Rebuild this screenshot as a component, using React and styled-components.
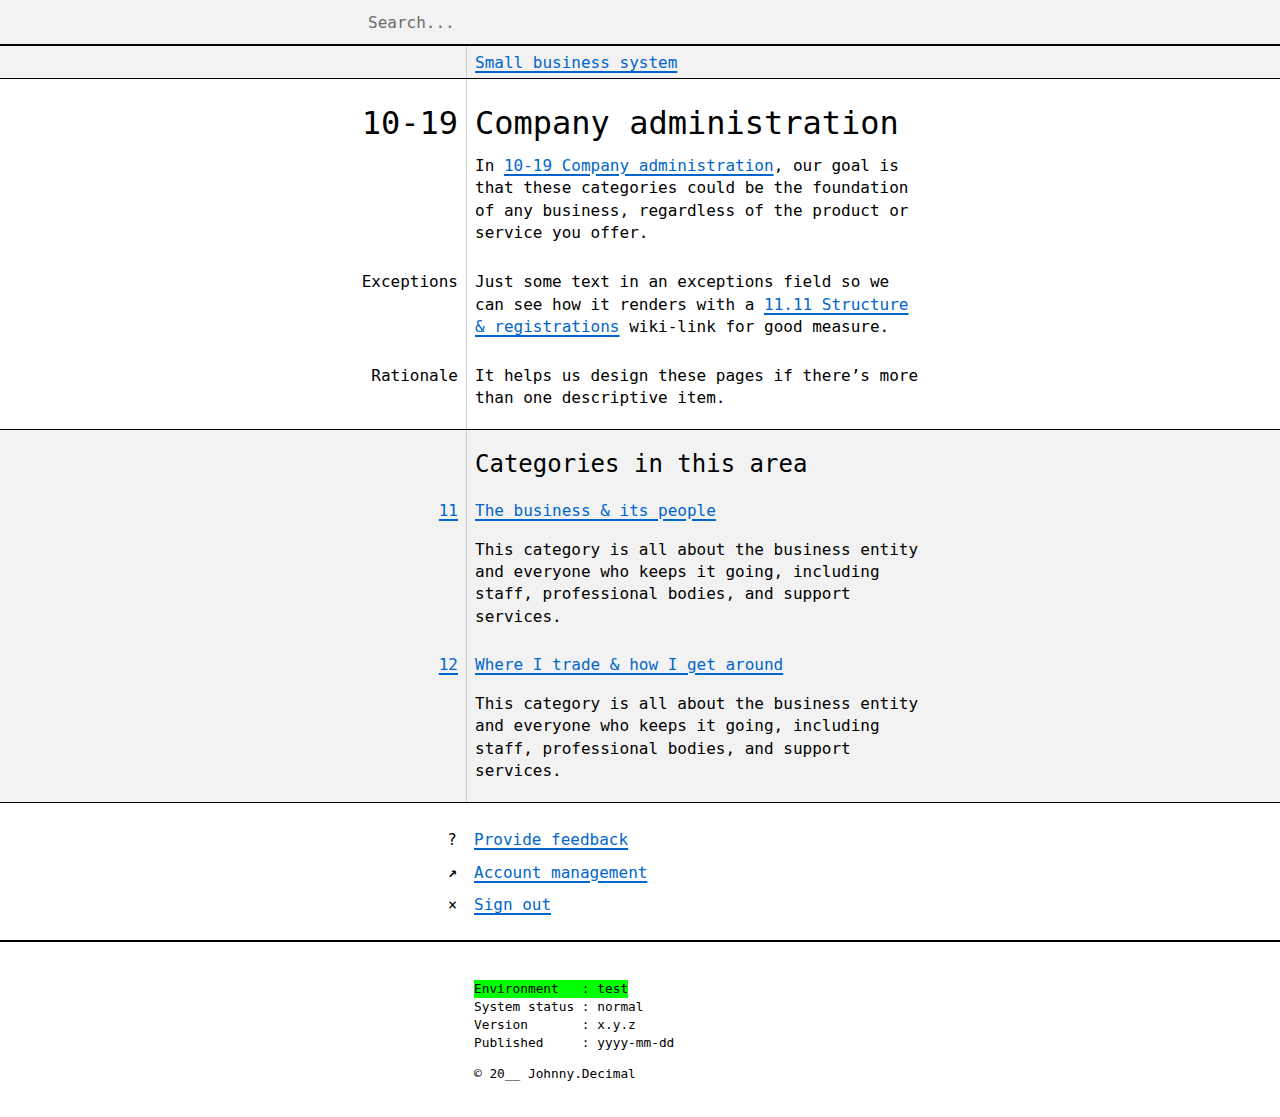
import React from 'react';
import styled, { createGlobalStyle } from 'styled-components';

const GlobalStyle = createGlobalStyle`
  body {
    margin: 0;
    background: #fff;
    color: #000;
    font-family: "DejaVu Sans Mono", "Liberation Mono", monospace;
    font-size: 16px;
    line-height: 1.4;
  }
  * { box-sizing: border-box; }
`;

const LEFT = 467;

const SearchBar = styled.header`
  height: 46px;
  background: #f2f2f2;
  border-bottom: 2px solid #000;
  display: flex;
  align-items: center;
  padding-left: 360px;
`;

const SearchInput = styled.input`
  border: none;
  background: transparent;
  font-family: inherit;
  font-size: 16px;
  padding: 0 8px;
  width: 400px;
  color: #000;
  outline: none;

  &::placeholder {
    color: #6b6b6b;
  }
`;

const Section = styled.section`
  display: flex;
  flex-direction: column;
  background: linear-gradient(#cccccc, #cccccc) ${LEFT - 1}px 0 / 1px 100% no-repeat,
    ${(p) => (p.$grey ? '#f2f2f2' : '#fff')};
  padding: ${(p) => p.$pad || '0'};
  border-bottom: 1px solid #000;
`;

const Row = styled.div`
  display: grid;
  grid-template-columns: ${LEFT}px 1fr;
  margin-top: ${(p) => p.$mt || 0}px;
  align-items: start;
`;

const Label = styled.div`
  text-align: right;
  padding-right: 9px;
  font-size: ${(p) => (p.$big ? '32px' : '16px')};
  line-height: ${(p) => (p.$big ? 1.2 : 1.4)};
`;

const Body = styled.div`
  padding-left: 8px;
  max-width: ${8 + 450}px;
`;

const Link = styled.a`
  color: #0066cc;
  text-decoration: underline;
  text-decoration-thickness: 1.5px;
  text-underline-offset: 3px;
`;

const Title = styled.h1`
  margin: 0;
  font-size: 32px;
  font-weight: 400;
  line-height: 1.2;
`;

const SubTitle = styled.h2`
  margin: 0;
  font-size: 24px;
  font-weight: 400;
  line-height: 1.2;
`;

const Text = styled.p`
  margin: ${(p) => p.$mt || 0}px 0 0;
`;

const Nav = styled.nav`
  padding: 26px 0 24px;
  border-bottom: 2px solid #000;
  display: flex;
  flex-direction: column;
  gap: 10px;
`;

const NavItem = styled.div`
  display: grid;
  grid-template-columns: 466px 1fr;
  align-items: center;
`;

const NavIcon = styled.span`
  text-align: right;
  padding-right: 9px;
  font-size: ${(p) => p.$size || 16}px;
  font-weight: ${(p) => (p.$bold ? 700 : 400)};
`;

const NavLink = styled(Link)`
  padding-left: 8px;
`;

const Meta = styled.footer`
  display: grid;
  grid-template-columns: 466px 1fr;
  padding: 38px 0 33px;
  font-size: 12.8px;
  line-height: 18px;
`;

const MetaBlock = styled.div`
  padding-left: 8px;
  white-space: pre;
`;

const MetaLine = styled.div`
  & > span {
    display: inline-block;
    background: ${(p) => (p.$highlight ? '#00ff00' : 'transparent')};
  }
`;

const Copyright = styled.div`
  margin-top: 13px;
`;

const categories = [
  { id: '11', name: 'The business & its people' },
  { id: '12', name: 'Where I trade & how I get around' },
];

const desc =
  'This category is all about the business entity and everyone who keeps it going, including staff, professional bodies, and support services.';

const meta = [
  ['Environment   : test', true],
  ['System status : normal', false],
  ['Version       : x.y.z', false],
  ['Published     : yyyy-mm-dd', false],
];

export default function App() {
  return (
    <>
      <GlobalStyle />
      <SearchBar>
        <SearchInput placeholder="Search..." />
      </SearchBar>

      <Section $grey $pad="6px 0 4px">
        <Row>
          <Label />
          <Body>
            <Link href="#">Small business system</Link>
          </Body>
        </Row>
      </Section>

      <Section $pad="25px 0 19px">
        <Row>
          <Label $big>10-19</Label>
          <Body>
            <Title>Company administration</Title>
            <Text $mt={12}>
              In <Link href="#">10-19 Company administration</Link>, our goal is that these
              categories could be the foundation of any business, regardless of the product or
              service you offer.
            </Text>
          </Body>
        </Row>
        <Row $mt={27}>
          <Label>Exceptions</Label>
          <Body>
            Just some text in an exceptions field so we can see how it renders with a{' '}
            <Link href="#">11.11 Structure &amp; registrations</Link> wiki-link for good measure.
          </Body>
        </Row>
        <Row $mt={26.5}>
          <Label>Rationale</Label>
          <Body>It helps us design these pages if there’s more than one descriptive item.</Body>
        </Row>
      </Section>

      <Section $grey $pad="20px 0 20px">
        <Row>
          <Label />
          <Body>
            <SubTitle>Categories in this area</SubTitle>
          </Body>
        </Row>
        {categories.map((c, i) => (
          <Row key={c.id} $mt={i === 0 ? 21 : 25.6}>
            <Label>
              <Link href="#">{c.id}</Link>
            </Label>
            <Body>
              <Link href="#">{c.name}</Link>
              <Text $mt={16.6}>{desc}</Text>
            </Body>
          </Row>
        ))}
      </Section>

      <Nav>
        <NavItem>
          <NavIcon>?</NavIcon>
          <span>
            <NavLink href="#">Provide feedback</NavLink>
          </span>
        </NavItem>
        <NavItem>
          <NavIcon $size={15} $bold>↗</NavIcon>
          <span>
            <NavLink href="#">Account management</NavLink>
          </span>
        </NavItem>
        <NavItem>
          <NavIcon $size={15}>×</NavIcon>
          <span>
            <NavLink href="#">Sign out</NavLink>
          </span>
        </NavItem>
      </Nav>

      <Meta>
        <div />
        <MetaBlock>
          {meta.map(([line, hl]) => (
            <MetaLine key={line} $highlight={hl}>
              <span>{line}</span>
            </MetaLine>
          ))}
          <Copyright>© 20__ Johnny.Decimal</Copyright>
        </MetaBlock>
      </Meta>
    </>
  );
}
